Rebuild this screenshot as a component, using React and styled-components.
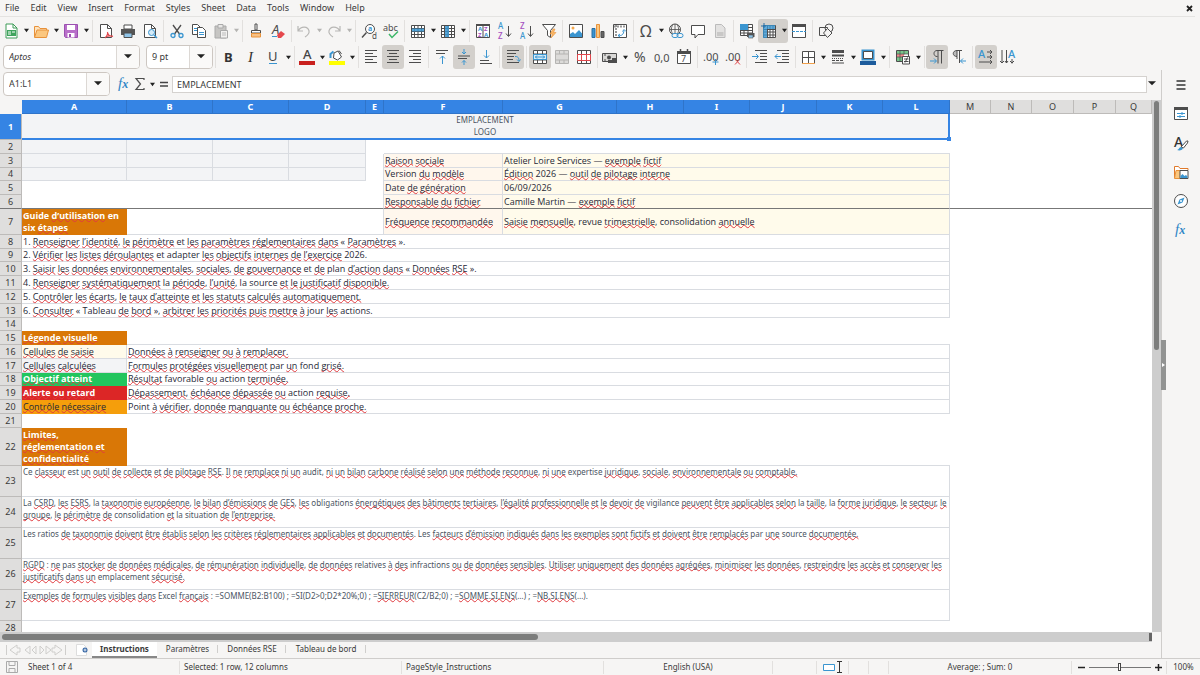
import React from 'react';
import styled, { createGlobalStyle, css } from 'styled-components';

const BLUE = '#3584e4';
const DARK = '#4d4d4d';
const ICON_BLUE = '#3a95d0';

/* ---------- icons ---------- */

const line = { fill: 'none', stroke: DARK, strokeWidth: 1 };
const blue = { fill: 'none', stroke: ICON_BLUE, strokeWidth: 1 };

const T = ({ x, y, s = 10, c = DARK, w, i, children }) => (
  <text x={x} y={y} fontSize={s} fill={c} fontWeight={w} fontStyle={i ? 'italic' : undefined} fontFamily="Noto Sans, sans-serif">
    {children}
  </text>
);

const icons = {
  new: (
    <>
      <path d="M3 1h7l4 4v10H3z" fill="#fff" stroke="#3f9c58" />
      <path d="M10 1v4h4" fill="none" stroke="#3f9c58" />
      <path d="M4 7h9v6H4z" fill="#3fa45d" />
      <path d="M5 9h3M5 11h3M9 9h3" stroke="#fff" />
    </>
  ),
  open: (
    <>
      <path d="M1.500 14V3.500h4l1.500 2h6.500V7" fill="#fde3bf" stroke="#e8923a" />
      <path d="M1.500 14.500 4 7h11.500l-2 7.500z" fill="#fbc77f" stroke="#e8923a" />
    </>
  ),
  save: (
    <>
      <path d="M1.500 1.500h13v13h-12l-1-1z" fill="#b86fc9" stroke="#9b4fb0" />
      <path d="M4 2h8v5H4z" fill="#fff" />
      <path d="M4.500 10h7v4.500h-7z" fill="#fff" />
      <path d="M6 11h2v3H6z" fill="#9b4fb0" />
    </>
  ),
  pdf: (
    <>
      <path d="M2.500 1.500h7l4 4v9h-11z" fill="#fff" stroke={DARK} />
      <path d="M9.500 1.500v4h4" {...line} />
      <path d="M7 15c2-2 3-4 2.500-6M9.500 10c1 3 3 3.500 5.500 3M7 14.500c2-1.500 5-2 8-1" fill="none" stroke="#e0474c" strokeWidth="1.200" />
    </>
  ),
  print: (
    <>
      <path d="M4 2h8v4H4z" fill="#fff" stroke={DARK} />
      <path d="M1 6h14v6H1z" fill="#555" />
      <path d="M4 10h8v4.500H4z" fill="#8fc3e6" stroke={DARK} />
    </>
  ),
  preview: (
    <>
      <path d="M2.500 1.500h7l4 4v9h-11z" fill="#fff" stroke={DARK} />
      <path d="M9.500 1.500v4h4" {...line} />
      <circle cx="9.500" cy="9.500" r="3" fill="#d5ebf8" stroke={ICON_BLUE} />
      <path d="m12 12 3 3" stroke={ICON_BLUE} strokeWidth="1.500" />
    </>
  ),
  cut: (
    <>
      <path d="M4 2l6.500 9M12 2 5.500 11" {...line} strokeWidth="1.300" />
      <circle cx="4" cy="12.500" r="2" {...blue} strokeWidth="1.300" />
      <circle cx="12" cy="12.500" r="2" {...blue} strokeWidth="1.300" />
    </>
  ),
  copy: (
    <>
      <path d="M1.500 1.500h5l3 3v7h-8z" fill="#fff" stroke={DARK} />
      <path d="M6.500 4.500h5l3 3v7h-8z" fill="#fff" stroke={DARK} />
      <path d="M3 5.500h3M3 7.500h3M8 9.500h5M8 11.500h5" stroke={ICON_BLUE} />
    </>
  ),
  paste: (
    <>
      <path d="M2 3h11v12H2z" fill="#c6c5c3" stroke="#aaa" />
      <path d="M5 1.500h5V5H5z" fill="#e8e7e6" stroke="#aaa" />
      <path d="M7.500 7.500h7v7.500h-7z" fill="#f2f1f0" stroke="#aaa" />
      <path d="M9 10h4M9 12h4" stroke="#bbb" />
    </>
  ),
  brush: (
    <>
      <path d="M7 1h2v6H7z" fill="#fff" stroke={DARK} />
      <path d="M3.500 7.500h9V10h-9z" fill="#fff" stroke={DARK} />
      <path d="M3.500 10.500h9V14h-9z" fill="#f9c184" stroke="#e8923a" />
    </>
  ),
  clear: (
    <>
      <T x={2} y={11} s={13} i>A</T>
      <path d="m7 12 4-4 4 3-4 4H8z" fill="#e5484d" />
      <path d="M2 13.500h5" stroke={ICON_BLUE} />
    </>
  ),
  undo: <path d="M2 3v5h5M2.500 7.500C5 3 12 3 13 8c.500 2-1 4-4 6" fill="none" stroke="#b8b7b5" strokeWidth="1.200" />,
  redo: <path d="M14 3v5H9M13.500 7.500C11 3 4 3 3 8c-.500 2 1 4 4 6" fill="none" stroke="#b8b7b5" strokeWidth="1.200" />,
  find: (
    <>
      <circle cx="9" cy="6" r="4.500" fill="#fff" stroke={DARK} />
      <path d="m5.500 9.500-4.500 5" stroke={DARK} strokeWidth="1.400" />
      <T x={7} y={8} s={7} c={ICON_BLUE} w={700}>a</T>
      <T x={11} y={16} s={8}>d</T>
    </>
  ),
  spell: (
    <>
      <T x={0} y={8} s={9}>abc</T>
      <path d="m6 11 3 3.500 6-6" fill="none" stroke="#3eb86a" strokeWidth="1.500" />
    </>
  ),
  rows: (
    <>
      <path d="M1.500 2.500h13v12h-13zM1.500 5.500h13M1.500 8.500h13M1.500 11.500h13M4.500 2.500v12M8 2.500v12M11.500 2.500v12" {...line} fill="#fff" />
      <path d="M2 5.500h12v3H2z" fill={ICON_BLUE} opacity=".85" />
    </>
  ),
  cols: (
    <>
      <path d="M1.500 2.500h13v12h-13zM1.500 5.500h13M1.500 8.500h13M1.500 11.500h13M4.500 2.500v12M8 2.500v12M11.500 2.500v12" {...line} fill="#fff" />
      <path d="M5 3h4v11H5z" fill={ICON_BLUE} opacity=".85" />
    </>
  ),
  sort: (
    <>
      <path d="M1.500 1.500h13v13h-13zM8 1.500v13" fill="#fff" stroke={DARK} />
      <path d="M1 1h14v2H1z" fill={DARK} />
      <T x={3} y={8} s={6} c={ICON_BLUE} w={700}>A</T>
      <T x={3} y={14} s={6} c="#a44fc0" w={700}>Z</T>
      <T x={9} y={8} s={6} c="#a44fc0" w={700}>Z</T>
      <T x={9} y={14} s={6} c={ICON_BLUE} w={700}>A</T>
    </>
  ),
  asc: (
    <>
      <T x={1} y={6} s={8} c={ICON_BLUE} w={500}>A</T>
      <T x={1} y={16} s={8} c="#a44fc0" w={500}>Z</T>
      <path d="M11.500 3v10M9 10.500l2.500 3 2.500-3" {...line} />
    </>
  ),
  desc: (
    <>
      <T x={1} y={6} s={8} c="#a44fc0" w={500}>Z</T>
      <T x={1} y={16} s={8} c={ICON_BLUE} w={500}>A</T>
      <path d="M11.500 3v10M9 10.500l2.500 3 2.500-3" {...line} />
    </>
  ),
  filter: (
    <>
      <path d="M1.500 1.500h13l-5 6v7l-3-2v-5z" fill="#fff" stroke={DARK} />
      <path d="m12 6-3 5h2.500L10 15l5-5.500h-2.500L14 6z" fill="#fbb968" stroke="#e8923a" strokeWidth=".6" />
    </>
  ),
  image: (
    <>
      <path d="M1.500 1.500h13v13h-13z" fill="#fff" stroke={DARK} />
      <circle cx="5" cy="5" r="1.500" fill="#f5a94e" />
      <path d="m2 14v-3l3-2 2 2 4-4 3 3.500V14z" fill={ICON_BLUE} />
    </>
  ),
  chart: (
    <>
      <path d="M2 5.500h3v9H2z" fill={ICON_BLUE} stroke="#2a6ea3" />
      <path d="M6.500 1.500h3v13h-3z" fill="#fbc77f" stroke="#e8923a" />
      <path d="M11 8.500h3v6h-3z" fill="#666" stroke={DARK} />
    </>
  ),
  pivot: (
    <>
      <path d="M1.500 1.500h13v13h-13z" fill="#fff" stroke={DARK} />
      <path d="M2 3.500h12M4 2v12" stroke="#999" strokeWidth="2" strokeDasharray="2 1" />
      <path d="M6 12.500c4 .500 5.500-1 6-5M10.500 8.500l1.500-2 2 2M8 11l-2 1.500L8 14" {...blue} />
    </>
  ),
  omega: <T x={2} y={14} s={16}>Ω</T>,
  link: (
    <>
      <circle cx="7" cy="6.500" r="5.500" {...line} />
      <path d="M1.500 6.500h11M7 1v11M4.500 2c-1.500 3-1.500 6 0 9M9.500 2c1.500 3 1.500 6 0 9" {...line} strokeWidth=".8" />
      <rect x="4" y="10.500" width="6" height="4" rx="2" fill="#f6f5f4" stroke={ICON_BLUE} />
      <rect x="9" y="10.500" width="6" height="4" rx="2" {...blue} />
    </>
  ),
  comment: <path d="M1.500 2.500h13v9H8l-3 3.500v-3.500H1.500z" fill="#fff" stroke={DARK} />,
  header: (
    <>
      <path d="M3.500 1.500h6l3.500 3.500v9.500H3.500z" fill="#e3e2e1" stroke="#bbb" />
      <path d="M5 9h6.500v4H5z" fill="#c9c8c7" />
    </>
  ),
  area: (
    <>
      <path d="M1.500 1.500h12v11h-12zM1.500 4.500h12M1.500 7.500h12M1.500 10h12M5 1.500v11M9 1.500v11" fill="#fff" stroke={DARK} />
      <path d="M1 1h8v6H1z" fill={ICON_BLUE} />
      <path d="M8 10h7.500v4H8z" fill="#555" />
      <path d="M9.500 12h4.500v3H9.500z" fill="#8fc3e6" stroke={DARK} strokeWidth=".6" />
    </>
  ),
  freeze: (
    <>
      <path d="M2.500 2.500h12v12h-12zM2.500 6.500h12M2.500 9h12M2.500 12h12M6.500 2.500v12M9 2.500v12M12 2.500v12" fill="#fff" stroke={DARK} />
      <path d="M2 2h12v4H6v9H2z" fill={ICON_BLUE} opacity=".8" />
      <path d="M0 3h5M3 0v5" stroke="#2a6ea3" />
    </>
  ),
  split: (
    <>
      <path d="M1.500 2v12.500h13V2" fill="#fff" stroke={DARK} />
      <path d="M1 1h14v3H1z" fill={DARK} />
      <path d="M1 8.500h14" stroke={ICON_BLUE} strokeDasharray="3 1" />
    </>
  ),
  shapes: (
    <>
      <path d="M1.500 4.500h8v8h-8z" {...line} />
      <circle cx="11" cy="5" r="4" {...line} />
      <path d="m9.500 5.500 4.500 4.500-4.500 4.500L5.500 10z" fill="#f6f5f4" stroke={DARK} />
    </>
  ),
  bold: <T x={3} y={13} s={13} c="#333" w={700}>B</T>,
  italic: (
    <text x="5" y="13" fontSize="15" fontStyle="italic" fill="#333" fontFamily="Liberation Serif, serif">I</text>
  ),
  underline: (
    <>
      <T x={3} y={12} s={13} c="#444">U</T>
      <path d="M4 14.500h8" stroke={ICON_BLUE} />
    </>
  ),
  fontcolor: (
    <>
      <T x={4} y={10} s={13} c="#444" w={500}>A</T>
      <path d="M0 12h16v4H0z" fill="#c9211e" />
    </>
  ),
  fill: (
    <>
      <path d="m5 4 4-2 3.500 6-4 3-4-2z" fill="#fff" stroke={DARK} />
      <path d="M1.500 9V5l3-2.500" fill="none" stroke={ICON_BLUE} strokeWidth="2" />
      <path d="M10 1.500 12.500 5" {...line} />
      <path d="M0 12h16v4H0z" fill="#ff0" />
    </>
  ),
  left: <path d="M2 1.500h12M2 4.500h8M2 7.500h12M2 10.500h8M2 13.500h12" {...line} />,
  center: <path d="M2 1.500h12M4 4.500h8M2 7.500h12M4 10.500h8M2 13.500h12" {...line} />,
  right: <path d="M2 1.500h12M6 4.500h8M2 7.500h12M6 10.500h8M2 13.500h12" {...line} />,
  top: (
    <>
      <path d="M2 1.500h12M2 4.500h9" {...line} />
      <path d="M8.500 15V7M6 9.500 8.500 7 11 9.500" {...blue} />
    </>
  ),
  middle: (
    <>
      <path d="M2 7h12M2 9.500h9" {...line} />
      <path d="M8 0v5M6 3l2 2 2-2M8 16v-4.500M6 13.500l2-2 2 2" {...blue} />
    </>
  ),
  bottom: (
    <>
      <path d="M2 11.500h9M2 14.500h12" {...line} />
      <path d="M8.500 1v8M6 6.500 8.500 9 11 6.500" {...blue} />
    </>
  ),
  wrap: (
    <>
      <path d="M2 1.500h12M2 4.500h9M2 7.500h7M2 10.500h6M2 13.500h12" {...line} />
      <path d="M10 7.500c3 0 4 1 4 4.500M12 10.500l2 2 1.500-2" {...blue} />
    </>
  ),
  merge: (
    <>
      <path d="M1.500 1.500h13v13h-13zM1.500 5h13M1.500 11h13M5.500 1.500V5M10.500 1.500V5M5.500 11v3.500M10.500 11v3.500" fill="#fff" stroke={DARK} />
      <path d="M1.500 5.500h13v5h-13z" fill="#d5ebf8" stroke={ICON_BLUE} />
      <path d="M3 8h10M5 6.500 3.500 8 5 9.500M11 6.500 12.500 8 11 9.500" {...blue} />
    </>
  ),
  mergeoff: <path d="M1.500 1.500h13v13h-13zM1.500 5h13M1.500 11h13M5.500 1.500V5M10 1.500V5M5.500 11v3.500M10 11v3.500" fill="#dcdbd9" stroke="#b5b4b2" />,
  unmerge: (
    <>
      <path d="M1.500 1.500h13v13h-13zM5.500 1.500v13M10.500 1.500v13" fill="#fff" stroke={DARK} />
      <path d="M1.500 5.500h13v6h-13zM5.500 5.500v6M10.500 5.500v6" fill="#fff" stroke="#e0474c" />
    </>
  ),
  currency: (
    <>
      <path d="M.500 4.500h14v8H.500z" fill="#d9d8d6" stroke={DARK} />
      <circle cx="7" cy="8.500" r="2" fill={DARK} />
      <path d="M10 9h5v5h-5zM6 11h4v3H6z" fill={DARK} />
      <path d="M2 6h2M2 11h2" {...line} />
    </>
  ),
  percent: <T x={2} y={13} s={14}>%</T>,
  number: <T x={0} y={13} s={11}>0,0</T>,
  date: (
    <>
      <path d="M1.500 3h13v11.500h-13z" fill="#fff" stroke={DARK} />
      <path d="M1 2h14v3H1z" fill={DARK} />
      <path d="M4.500 0v3M11.500 0v3" stroke={DARK} strokeWidth="1.500" />
      <T x={5} y={13} s={9}>7</T>
    </>
  ),
  adddec: (
    <>
      <T x={0} y={12} s={11}>.00</T>
      <path d="M12.500 10v6M9.500 13h6" {...blue} />
    </>
  ),
  deldec: (
    <>
      <T x={0} y={12} s={11}>.00</T>
      <path d="m10 10 5 5.500M15 10l-5 5.500" fill="none" stroke="#e0474c" />
    </>
  ),
  indent: (
    <>
      <path d="M3 1.500h12M8 4.500h7M8 7.500h7M8 10.500h7M3 13.500h12" {...line} />
      <path d="M0 7.500h6M4 5l2.500 2.500L4 10" {...blue} />
    </>
  ),
  outdent: (
    <>
      <path d="M3 1.500h12M8 4.500h7M8 7.500h7M8 10.500h7M3 13.500h12" {...line} />
      <path d="M1 7.500h6M3.500 5 1 7.500 3.500 10" {...blue} />
    </>
  ),
  borders: (
    <>
      <path d="M2.500 14V2.500h12V14M8.500 2.500v12M2.500 8.500h12" fill="#fff" stroke={DARK} />
      <path d="M2 14.500h13" stroke="#f0a04b" />
    </>
  ),
  style: (
    <>
      <path d="M2 2.500h12" stroke={DARK} strokeWidth="3" />
      <path d="M2 6.500h12" stroke={DARK} strokeWidth="2" />
      <path d="M2 9.500h12" stroke={DARK} strokeDasharray="1 1" />
      <path d="M2 11.500h12" stroke={DARK} strokeDasharray="3 1" />
      <path d="M2 14h12" {...line} />
    </>
  ),
  bordercolor: (
    <>
      <path d="M2.500 1.500h11v9h-11z" fill="#fff" stroke={ICON_BLUE} strokeWidth="2" />
      <path d="M3.500 2.500h9v7h-9z" {...line} />
      <path d="M0 12h16v4H0z" fill="#1d5c9c" />
    </>
  ),
  cond: (
    <>
      <path d="M1.500 1.500h12v11h-12z" fill="#fff" stroke={DARK} />
      <path d="M2 2h11v3H2z" fill="#79c68c" />
      <path d="M2 5h7v3H2z" fill="#f08b8e" />
      <path d="M2 8h5v4H2z" fill="#79c68c" />
      <path d="M1.500 5h12M1.500 8h12M5 1.500v11M9 1.500v4" {...line} strokeWidth=".7" />
      <path d="M7.500 7.500h7v7.500h-7z" fill="#fff" stroke={DARK} />
      <path d="M9 10h4.500M9 12.500h4.500M12.500 8.500l-2.500 5" {...line} />
    </>
  ),
  ltr: (
    <>
      <path d="M14.500 1.500H8c-4 0-4 6 0 6h.500M9 1.500v13M12.500 1.500v13" {...line} />
      <path d="M1 12h6M5 9.500 7.500 12 5 14.500" {...blue} />
    </>
  ),
  rtl: (
    <>
      <path d="M11 1.500H6c-5 0-5 6 0 6v-6M6 7.500V10M8.500 1.500V14" fill="#bbb" stroke={DARK} />
      <path d="M15 12H9.500M12 9.500 9.500 12l2.500 2.500" {...blue} />
    </>
  ),
  horiz: (
    <>
      <T x={0} y={9} s={11} c={ICON_BLUE} w={500}>A</T>
      <path d="M9 3h5M12 1l2 2-2 2M9 8h5M12 6l2 2-2 2M1 13h13M12 11l2 2-2 2" {...line} />
    </>
  ),
  vert: (
    <>
      <T x={8} y={9} s={11} c={ICON_BLUE} w={500}>A</T>
      <path d="M2 1v13M0 12l2 2 2-2M6.500 1v13M5 12l1.500 2L8 12M12 10v4.500M10 12l2 2 2-2" {...line} />
    </>
  ),
  fx: (
    <text x="2" y="12" fontSize="15" fontStyle="italic" fill="#2f86c6" fontFamily="Liberation Serif, serif">
      f<tspan fontSize="12" fontWeight="700">x</tspan>
    </text>
  ),
  sum: <path d="M12 4V2.500H4L8.500 8 4 13.500h8V12" {...line} strokeWidth="1.200" />,
  equals: <path d="M4 6.500h8M4 10h8" stroke="#444" strokeWidth="1.500" />,
  menu: <path d="M3.500 4h9M3.500 8h9M3.500 12h9" stroke="#333" strokeWidth="1.500" />,
  props: (
    <>
      <path d="M1.500 1.500h13v12h-13z" fill="#fff" stroke={DARK} />
      <path d="M1 1h14v3H1z" fill={DARK} />
      <path d="M4 7.500h8M4 10.500h8M9 6v3M7 9v3" {...blue} />
    </>
  ),
  styles: (
    <>
      <T x={1} y={12} s={14} c="#333" w={500}>A</T>
      <path d="m8 12 5.500-6h1.500l-.500 2-4 5z" fill="#fff" stroke={DARK} />
      <path d="M4 15c2 0 2-3 4-3l2 1.500c-1 2-4 2.500-6 1.500z" fill={ICON_BLUE} />
    </>
  ),
  gallery: (
    <>
      <path d="M1.500 14V2.500h4l1.500 2h8V6" fill="#fff" stroke="#e07a2b" />
      <path d="M1.500 14.500 3 6.500h11v8z" fill="#fbc77f" stroke="#e8923a" />
      <path d="M7 6.500h8v8H7z" fill="#fff" stroke={DARK} />
      <path d="m7.500 14v-2l2-2 2 2 1.500-1 1.500 1.500V14z" fill={ICON_BLUE} />
    </>
  ),
  navigator: (
    <>
      <circle cx="8" cy="8" r="6.500" fill="#fff" stroke={DARK} />
      <path d="M11.500 4.500 9.500 9.500 4.500 11.500 6.500 6.500z" fill={ICON_BLUE} />
      <circle cx="8" cy="8" r="1" fill="#fff" />
    </>
  ),
};

const Svg = styled.svg`
  display: block;
  flex: none;
  overflow: visible;
`;

const Icon = ({ name, size = 16 }) => (
  <Svg width={size} height={size} viewBox="0 0 16 16" aria-hidden="true">
    {icons[name]}
  </Svg>
);

const Caret = ({ size = 5, muted }) => (
  <Svg width={size} height={size} viewBox="0 0 6 6" aria-hidden="true">
    <path d={size > 5 ? 'M0 1h6L3 4z' : 'M0 1h6L3 5z'} fill={muted ? '#b5b4b2' : '#222'} />
  </Svg>
);

/* ---------- data ---------- */

const menus = ['File', 'Edit', 'View', 'Insert', 'Format', 'Styles', 'Sheet', 'Data', 'Tools', 'Window', 'Help'];

// "+" adds a drop-down arrow, "*" is switched on, "!" is disabled, "|" and ";" are separators
const standardBar =
  'new+ open+ save+ | pdf print preview | cut copy paste+! | brush clear ; undo+! redo+! | find spell | rows+ cols+ | sort asc desc filter | image chart pivot ; omega+ link comment header | area freeze+* split | shapes';
const formatBar =
  '| bold italic underline+ ; fontcolor+ fill+ ; left center* right | top middle* bottom | wrap* | merge* mergeoff unmerge ; currency+ percent number date | adddec deldec | indent outdent ; borders+ style+ bordercolor+ | cond+ ; ltr* rtl | horiz* vert';

const columns = [
  ['A', 105], ['B', 86], ['C', 76], ['D', 77], ['E', 18], ['F', 119], ['G', 114], ['H', 67], ['I', 66],
  ['J', 67], ['K', 66], ['L', 67], ['M', 41], ['N', 41], ['O', 42], ['P', 42], ['Q', undefined],
];

// words between brackets carry the spell checker's underline
const rows = [
  { h: 26, cells: [{ span: 12, kind: 'selected', text: 'EMPLACEMENT\nLOGO' }] },
  { h: 14, cells: [{ kind: 'grey' }, { kind: 'grey' }, { kind: 'grey' }, { kind: 'grey' }, {}, { span: 7, kind: 'under' }] },
  { h: 14, cells: [{ kind: 'grey' }, { kind: 'grey' }, { kind: 'grey' }, { kind: 'grey' }, { kind: 'side' }, { kind: 'peach', text: '[Raison] [sociale]' }, { span: 6, kind: 'cream', text: 'Atelier Loire Services — [exemple] [fictif]' }] },
  { h: 13, cells: [{ kind: 'grey' }, { kind: 'grey' }, { kind: 'grey' }, { kind: 'grey' }, { kind: 'side' }, { kind: 'peach', text: 'Version [du] [modèle]' }, { span: 6, kind: 'cream', text: '[Édition] 2026 — [outil] [de] [pilotage] [interne]' }] },
  { h: 14, cells: [{ span: 5, kind: 'side' }, { kind: 'peach', text: 'Date [de] [génération]' }, { span: 6, kind: 'cream', text: '06/09/2026' }] },
  { h: 14, frozen: true, cells: [{ span: 5, kind: 'side' }, { kind: 'peach', text: '[Responsable] [du] [fichier]' }, { span: 6, kind: 'cream', text: 'Camille Martin — [exemple] [fictif]' }] },
  { h: 26, cells: [{ kind: 'title', text: 'Guide [d’utilisation] en\nsix [étapes]' }, { span: 4, kind: 'corner' }, { kind: 'peach', text: '[Fréquence] [recommandée]' }, { span: 6, kind: 'cream', text: '[Saisie] [mensuelle], revue [trimestrielle], consolidation [annuelle]' }] },
  { h: 14, cells: [{ span: 12, kind: 'plain', text: '1. [Renseigner] [l’identité], [le] [périmètre] et [les] [paramètres] [réglementaires] [dans] « [Paramètres] ».' }] },
  { h: 13, cells: [{ span: 12, kind: 'plain', text: '2. [Vérifier] [les] [listes] [déroulantes] et adapter [les] [objectifs] [internes] [de] [l’exercice] 2026.' }] },
  { h: 14, cells: [{ span: 12, kind: 'plain', text: '3. [Saisir] [les] [données] [environnementales], [sociales], [de] [gouvernance] et [de] plan [d’action] [dans] « [Données] [RSE] ».' }] },
  { h: 14, cells: [{ span: 12, kind: 'plain', text: '4. [Renseigner] [systématiquement] la [période], [l’unité], la source [et] [le] [justificatif] [disponible.]' }] },
  { h: 14, cells: [{ span: 12, kind: 'plain', text: '5. [Contrôler] [les] [écarts], [le] [taux] [d’atteinte] [et] [les] [statuts] [calculés] [automatiquement.]' }] },
  { h: 14, cells: [{ span: 12, kind: 'plain', text: '6. [Consulter] « Tableau [de] [bord] », [arbitrer] [les] [priorités] [puis] [mettre] [à] jour [les] actions.' }] },
  { h: 13, cells: [] },
  { h: 14, cells: [{ kind: 'title', text: '[Légende] [visuelle]' }, { span: 11, kind: 'under' }] },
  { h: 14, cells: [{ kind: 'cream', text: '[Cellules] [de] [saisie]' }, { span: 11, kind: 'plain', text: '[Données] [à] [renseigner] [ou] [à] [remplacer.]' }] },
  { h: 14, cells: [{ kind: 'grey', text: '[Cellules] [calculées]' }, { span: 11, kind: 'plain', text: '[Formules] [protégées] [visuellement] par [un] fond [grisé.]' }] },
  { h: 13, cells: [{ kind: 'green', text: '[Objectif] [atteint]' }, { span: 11, kind: 'plain', text: '[Résultat] favorable [ou] action [terminée.]' }] },
  { h: 14, cells: [{ kind: 'red', text: '[Alerte] [ou] [retard]' }, { span: 11, kind: 'plain', text: '[Dépassement], [échéance] [dépassée] [ou] action [requise.]' }] },
  { h: 14, cells: [{ kind: 'amber', text: '[Contrôle] [nécessaire]' }, { span: 11, kind: 'plain', text: 'Point [à] [vérifier], [donnée] [manquante] [ou] [échéance] [proche.]' }] },
  { h: 14, cells: [] },
  { h: 38, cells: [{ kind: 'title', text: '[Limites],\n[réglementation] [et]\n[confidentialité]' }, { span: 11, kind: 'under' }] },
  { h: 31, cells: [{ span: 12, kind: 'note', text: 'Ce [classeur] est [un] [outil] [de] [collecte] [et] [de] [pilotage] [RSE]. [Il] [ne] [remplace] [ni] [un] audit, [ni] [un] [bilan] [carbone] [réalisé] [selon] [une] [méthode] [reconnue], [ni] [une] expertise [juridique], [sociale], [environnementale] [ou] [comptable.]' }] },
  { h: 31, cells: [{ span: 12, kind: 'note', text: 'La [CSRD], [les] [ESRS], la [taxonomie] [européenne], [le] [bilan] [d’émissions] [de] [GES], [les] obligations [énergétiques] [des] [bâtiments] [tertiaires], [l’égalité] [professionnelle] [et] [le] [devoir] [de] vigilance [peuvent] [être] [applicables] [selon] la [taille], la [forme] [juridique], [le] [secteur], [le]\n[groupe], [le] [périmètre] [de] consolidation [et] la situation [de] [l’entreprise.]' }] },
  { h: 31, cells: [{ span: 12, kind: 'note', text: 'Les ratios [de] [taxonomie] [doivent] [être] [établis] [selon] [les] [critères] [réglementaires] [applicables] [et] [documentés]. Les [facteurs] [d’émission] [indiqués] [dans] [les] [exemples] [sont] [fictifs] [et] [doivent] [être] [remplacés] par [une] source [documentée.]' }] },
  { h: 31, cells: [{ span: 12, kind: 'note', text: '[RGPD] : [ne] pas [stocker] [de] [données] [médicales], [de] [rémunération] [individuelle], [de] [données] relatives [à] [des] infractions [ou] [de] [données] [sensibles]. [Utiliser] [uniquement] [des] [données] [agrégées], [minimiser] [les] [données], [restreindre] [les] [accès] [et] [conserver] [les]\n[justificatifs] [dans] [un] emplacement [sécurisé.]' }] },
  { h: 31, cells: [{ span: 12, kind: 'note', text: '[Exemples] [de] [formules] [visibles] [dans] Excel [français] : =SOMME(B2:B100) ; =SI(D2>0;D2*20%;0) ; =[SIERREUR](C2/B2;0) ; =[SOMME.SI.ENS](…) ; =[NB.SI.ENS](…).' }] },
  { h: 14, cells: [] },
];

/* ---------- parts ---------- */

const Toolbar = ({ items }) =>
  items.split(' ').map((item, i) => {
    if (item === '|' || item === ';') return <Separator key={i} $tight={item === ';'} />;
    const name = item.replace(/[+*!]/g, '');
    const disabled = item.includes('!');
    return (
      <ToolGroup key={i} $on={item.includes('*')}>
        <ToolButton aria-label={name} disabled={disabled}>
          <Icon name={name} />
        </ToolButton>
        {item.includes('+') && (
          <ArrowButton aria-label={`${name} options`} disabled={disabled}>
            <Caret muted={disabled} />
          </ArrowButton>
        )}
      </ToolGroup>
    );
  });

const Combo = ({ label, value, width, italic }) => (
  <ComboBox $width={width}>
    <ComboInput aria-label={label} defaultValue={value} $italic={italic} />
    <ComboArrow aria-label={`${label} list`}>
      <Caret size={8} />
    </ComboArrow>
  </ComboBox>
);

const CellText = ({ text }) =>
  text.split(/(\[[^\]]+\]|\n)/).map((part, i) => {
    if (part === '\n') return <br key={i} />;
    if (part[0] === '[') return <Misspelt key={i}>{part.slice(1, -1)}</Misspelt>;
    return part;
  });

const Sheet = () => (
  <Table>
    <colgroup>
      <Col $w={22} />
      {columns.map(([name, w]) => (
        <Col key={name} $w={w} />
      ))}
    </colgroup>
    <thead>
      <tr>
        <Corner />
        {columns.map(([name], i) => (
          <ColumnHead key={name} scope="col" $on={i < 12}>{name}</ColumnHead>
        ))}
      </tr>
    </thead>
    <tbody>
      {rows.map((row, r) => {
        const used = row.cells.reduce((n, c) => n + (c.span || 1), 0);
        return (
          <Row key={r} $h={row.h} $frozen={row.frozen}>
            <RowHead scope="row" $on={r === 0}>{r + 1}</RowHead>
            {row.cells.map((cell, i) => (
              <Cell key={i} colSpan={cell.span} $kind={cell.kind}>
                {cell.text && <CellText text={cell.text} />}
                {cell.kind === 'selected' && <Handle />}
              </Cell>
            ))}
            <Cell colSpan={17 - used} />
          </Row>
        );
      })}
    </tbody>
  </Table>
);

const App = () => {
  return (
    <React.Fragment>
      <GlobalStyle />
      <Window>
        <MenuBar>
          {menus.map((m) => (
            <MenuButton key={m}>{m}</MenuButton>
          ))}
          <CloseButton aria-label="Close document">
            <Svg width="7" height="7" viewBox="0 0 7 7">
              <path d="m1 1 5 5M6 1 1 6" stroke="#222" strokeWidth="1.800" />
            </Svg>
          </CloseButton>
        </MenuBar>
        <ToolRow $h={27}>
          <Toolbar items={standardBar} />
        </ToolRow>
        <ToolRow $h={26}>
          <Combos>
            <Combo label="Font name" value="Aptos" width={137} italic />
            <Combo label="Font size" value="9 pt" width={67} />
          </Combos>
          <Toolbar items={formatBar} />
        </ToolRow>
        <Body>
          <Main>
            <FormulaBar>
              <Combo label="Name box" value="A1:L1" width={107} />
              <FormulaTools>
                <SmallButton aria-label="Function wizard"><Icon name="fx" /></SmallButton>
                <SmallButton aria-label="Select function"><Icon name="sum" /></SmallButton>
                <ArrowButton aria-label="Function list"><Caret /></ArrowButton>
                <SmallButton aria-label="Formula"><Icon name="equals" /></SmallButton>
              </FormulaTools>
              <FormulaInput aria-label="Input line" defaultValue="EMPLACEMENT" />
              <ExpandButton aria-label="Expand formula bar"><Caret size={8} /></ExpandButton>
            </FormulaBar>
            <SheetArea>
              <SheetView>
                <Sheet />
              </SheetView>
              <VTrack>
                <VThumb />
              </VTrack>
            </SheetArea>
            <HTrack>
              <HThumb />
              <HGrip />
            </HTrack>
            <Tabs>
              <NavButtons>
                <Svg width="62" height="14" viewBox="0 0 62 14">
                  <path
                    d="M1.500 2v10M12 2 5 7l7 5V9h3V5h-3zM25 3l-5 4 5 4V3M31 3l-4 4 4 4zM35 3l4 4-4 4zM41 3l5 4-5 4zM50 2l7 5-7 5V9h-3V5h3zM60.500 2v10"
                    fill="none"
                    stroke="#cfcecc"
                  />
                </Svg>
              </NavButtons>
              <AddSheet aria-label="Add sheet">
                <Svg width="14" height="14" viewBox="0 0 14 14">
                  <path d="M1.500 1.500h7l3 3v8h-10z" fill="#fff" stroke="#ddd" />
                  <circle cx="10" cy="7" r="2.500" fill="#3465a4" />
                  <path d="M8.500 7h3M10 5.500v3" stroke="#fff" strokeWidth=".8" />
                </Svg>
              </AddSheet>
              <Tab $width={65} $active>Instructions</Tab>
              <Tab $width={61}>Paramètres</Tab>
              <Tab $width={68}>Données RSE</Tab>
              <Tab $width={80}>Tableau de bord</Tab>
            </Tabs>
          </Main>
          <SideBar>
            <SideGrip />
            {['menu', 'props', 'styles', 'gallery', 'navigator', 'fx'].map((name) => (
              <SideButton key={name} aria-label={name}>
                <Icon name={name} />
              </SideButton>
            ))}
          </SideBar>
        </Body>
        <StatusBar>
          <Status $w={24}>
            <Svg width="12" height="12" viewBox="0 0 12 12">
              <path d="M.500.500h11v11H.500zM3 .500v4h6v-4M3 11.500v-4h6v4" fill="none" stroke="#aaa" />
            </Svg>
          </Status>
          <Status $w={155} $left>Sheet 1 of 4</Status>
          <Status $w={222} $left $line>Selected: 1 row, 12 columns</Status>
          <Status $w={202} $left $line>PageStyle_Instructions</Status>
          <Status $w={169} $line>English (USA)</Status>
          <Status $w={44} $line />
          <Status $w={32} $line>
            <Svg width="20" height="12" viewBox="0 0 20 12">
              <path d="M.500 3.500h11v6H.500z" fill="#fff" stroke={ICON_BLUE} />
              <path d="M14 .500h5M14 11.500h5M16.500 1v10" stroke="#333" />
            </Svg>
          </Status>
          <Status $w={20} $line />
          <Status $w={20} $line />
          <Status $grow $line>Average: ; Sum: 0</Status>
          <ZoomControl>
            <ZoomButton aria-label="Zoom out">
              <Svg width="7" height="7" viewBox="0 0 7 7"><path d="M0 3.500h7" stroke="#222" strokeWidth="1.500" /></Svg>
            </ZoomButton>
            <ZoomSlider type="range" aria-label="Zoom" min="0" max="100" defaultValue="49" />
            <ZoomButton aria-label="Zoom in">
              <Svg width="7" height="7" viewBox="0 0 7 7"><path d="M0 3.500h7M3.500 0v7" stroke="#222" strokeWidth="1.500" /></Svg>
            </ZoomButton>
          </ZoomControl>
          <Status $w={34} $line>100%</Status>
        </StatusBar>
      </Window>
    </React.Fragment>
  );
};

const GlobalStyle = createGlobalStyle`
  * {
    box-sizing: border-box;
  }
  body {
    margin: 0;
    background: #f6f5f4;
    color: #3a3a3a;
    font: 9px/12px 'Noto Sans', sans-serif;
  }
  button, input {
    margin: 0;
    padding: 0;
    border: 0;
    background: none;
    color: inherit;
    font: inherit;
  }
`;

const Window = styled.div`
  display: flex;
  flex-direction: column;
  height: 100vh;
  overflow: hidden;
`;

const MenuBar = styled.nav`
  display: flex;
  align-items: center;
  gap: 1px;
  flex: none;
  height: 17px;
  margin-right: 5px;
  border-bottom: 1px solid #e4e3e1;
`;

const MenuButton = styled.button`
  padding: 0 5px;
`;

const CloseButton = styled.button`
  margin-left: auto;
  padding: 0 2px;
`;

const ToolRow = styled.div`
  display: flex;
  align-items: center;
  flex: none;
  height: ${(props) => props.$h}px;
`;

const ToolGroup = styled.div`
  display: flex;
  height: 24px;
  border-radius: 3px;
  background: ${(props) => (props.$on ? '#d3d0cc' : 'none')};
`;

const ToolButton = styled.button`
  display: flex;
  align-items: center;
  justify-content: center;
  width: 22px;
`;

const ArrowButton = styled.button`
  display: flex;
  align-items: center;
  justify-content: center;
  width: 8px;
`;

const Separator = styled.div`
  width: ${(props) => (props.$tight ? 4 : 5)}px;
  height: 22px;
  background: linear-gradient(#e2e0de, #e2e0de) center / 1px 100% no-repeat;
`;

const Combos = styled.div`
  display: flex;
  gap: 6px;
  padding-left: 3px;
`;

const ComboBox = styled.div`
  display: flex;
  flex: none;
  width: ${(props) => props.$width}px;
  height: 24px;
  border: 1px solid #cdc7c2;
  border-radius: 4px;
  background: #fff;
  overflow: hidden;
`;

const ComboInput = styled.input`
  flex: 1;
  min-width: 0;
  padding-left: 5px;
  font-style: ${(props) => (props.$italic ? 'italic' : 'normal')};
`;

const ComboArrow = styled.button`
  display: flex;
  align-items: center;
  justify-content: center;
  width: 23px;
  border-left: 1px solid #dcd8d4;
  background: #faf9f8;
`;

const Body = styled.div`
  display: flex;
  flex: 1;
  min-height: 0;
`;

const Main = styled.div`
  display: flex;
  flex-direction: column;
  flex: 1;
  min-width: 0;
`;

const FormulaBar = styled.div`
  display: flex;
  align-items: center;
  flex: none;
  height: 30px;
  padding: 0 4px 2px 3px;
`;

const FormulaTools = styled.div`
  display: flex;
  padding-left: 6px;
`;

const SmallButton = styled.button`
  display: flex;
  justify-content: center;
  width: 16px;
`;

const FormulaInput = styled.input`
  flex: 1;
  height: 17px;
  padding-left: 4px;
  border: 1px solid #d5d2cf;
  background: #fff;
`;

const ExpandButton = styled.button`
  padding: 0 1px;
`;

const SheetArea = styled.div`
  display: flex;
  flex: 1;
  min-height: 0;
`;

const SheetView = styled.div`
  flex: 1;
  min-width: 0;
  overflow: hidden;
  background: #fff;
`;

const Table = styled.table`
  width: 100%;
  table-layout: fixed;
  border-spacing: 0;
`;

const Col = styled.col`
  width: ${(props) => (props.$w ? `${props.$w}px` : 'auto')};
`;

const Corner = styled.td`
  padding: 0;
  background: #f6f5f4;
`;

const ColumnHead = styled.th`
  height: 14px;
  padding: 0;
  border-right: 1px solid ${(props) => (props.$on ? '#2f74c9' : '#bdbbb9')};
  border-bottom: 1px solid ${(props) => (props.$on ? '#2f74c9' : '#bdbbb9')};
  background: ${(props) => (props.$on ? BLUE : '#dfdedd')};
  color: ${(props) => (props.$on ? '#fff' : '#3a3a3a')};
  font-weight: ${(props) => (props.$on ? 700 : 400)};
`;

const RowHead = styled.th`
  padding: 0;
  border-right: 1px solid #bdbbb9;
  border-bottom: 1px solid #bdbbb9;
  background: ${(props) => (props.$on ? BLUE : '#dfdedd')};
  color: ${(props) => (props.$on ? '#fff' : '#3a3a3a')};
  font-weight: ${(props) => (props.$on ? 700 : 400)};
`;

const RULE = '1px solid #d9dce1';

const filled = (background, color, weight) => css`
  border-right: 1px solid ${background};
  border-bottom: 1px solid ${background};
  background: ${background};
  color: ${color};
  font-weight: ${weight};
`;

const ruled = (background) => css`
  border-right: ${RULE};
  border-bottom: ${RULE};
  background: ${background};
`;

const kinds = {
  plain: ruled('#fff'),
  grey: ruled('#f3f4f6'),
  cream: ruled('#fffbeb'),
  peach: ruled('#fff7ed'),
  title: filled('#d97706', '#fff', 700),
  green: filled('#22c55e', '#fff', 700),
  red: filled('#dc2626', '#fff', 700),
  amber: filled('#f59e0b', '#1f2937', 400),
  corner: ruled('#fff'),
  under: css`
    border-bottom: ${RULE};
  `,
  side: css`
    border-right: ${RULE};
  `,
  note: css`
    ${ruled('#fff')}
    color: #4b5563;
    font: 8px/12px 'Noto Sans', sans-serif;
    vertical-align: top;
  `,
  selected: css`
    position: relative;
    border: solid ${BLUE};
    border-width: 0 2px 2px 0;
    background: #f3f4f6;
    color: #4b5563;
    font: 8px/12px 'Noto Sans', sans-serif;
    text-align: center;
  `,
};

const Cell = styled.td`
  padding: 0 1px;
  color: #1f2937;
  font-family: 'Open Sans', sans-serif;
  white-space: nowrap;
  ${(props) => kinds[props.$kind]}
`;

const Row = styled.tr`
  height: ${(props) => props.$h}px;
  ${(props) =>
    props.$frozen &&
    css`
      & > td,
      & > th {
        border-bottom: 1px solid #777;
      }
    `}
`;

const Misspelt = styled.span`
  text-decoration: underline wavy #e03a3e 1px;
  text-decoration-skip-ink: none;
  text-underline-offset: -1px;
`;

const Handle = styled.span`
  position: absolute;
  right: -3px;
  bottom: -3px;
  width: 4px;
  height: 4px;
  background: ${BLUE};
`;

const VTrack = styled.div`
  width: 9px;
  padding: 1px 2px;
  background: #cdcdcd;
`;

const VThumb = styled.div`
  height: 47%;
  border-radius: 3px;
  background: #7c7d7c;
`;

const HTrack = styled.div`
  display: flex;
  align-items: center;
  justify-content: space-between;
  flex: none;
  height: 10px;
  margin-right: 9px;
  padding-left: 2px;
  background: #cdcdcd;
`;

const HThumb = styled.div`
  width: 46.600%;
  height: 6px;
  border-radius: 3px;
  background: #7c7d7c;
`;

const HGrip = styled.div`
  width: 3px;
  height: 8px;
  background: #666;
`;

const Tabs = styled.div`
  display: flex;
  flex: none;
  height: 16px;
  font-size: 8px;
`;

const NavButtons = styled.div`
  padding: 1px 0 0 5px;
  width: 75px;
`;

const AddSheet = styled.button`
  width: 17px;
`;

const Tab = styled.button`
  width: ${(props) => props.$width}px;
  border-bottom: 2px solid ${(props) => (props.$active ? '#888' : 'transparent')};
  background: ${(props) =>
    props.$active ? '#fff' : 'linear-gradient(#cfcecc, #cfcecc) right / 1px 8px no-repeat'};
  font-weight: ${(props) => (props.$active ? 700 : 400)};
`;

const SideBar = styled.aside`
  position: relative;
  display: flex;
  flex-direction: column;
  align-items: center;
  width: 39px;
  border-left: 1px solid #cfcdcb;
`;

const SideButton = styled.button`
  display: flex;
  align-items: center;
  justify-content: center;
  width: 24px;
  height: 29px;
`;

const SideGrip = styled.div`
  position: absolute;
  top: 46%;
  left: -1px;
  width: 5px;
  height: 50px;
  background: #929392;

  &::after {
    content: '';
    position: absolute;
    top: 23px;
    left: 1px;
    border: 2px solid transparent;
    border-left: 3px solid #fff;
    border-right: 0;
  }
`;

const StatusBar = styled.footer`
  display: flex;
  align-items: center;
  flex: none;
  height: 17px;
  border-top: 1px solid #cfcdcb;
  font-size: 8px;
`;

const Status = styled.div`
  display: flex;
  align-items: center;
  justify-content: ${(props) => (props.$left ? 'flex-start' : 'center')};
  flex: ${(props) => (props.$grow ? '1' : 'none')};
  width: ${(props) => (props.$w ? `${props.$w}px` : 'auto')};
  height: 13px;
  padding-left: ${(props) => (props.$left ? 4 : 0)}px;
  border-left: ${(props) => (props.$line ? '1px solid #e2e0de' : '0')};
`;

const ZoomControl = styled.div`
  display: flex;
  align-items: center;
  gap: 4px;
  width: 95px;
  height: 13px;
  padding: 0 4px 0 6px;
  border-left: 1px solid #e2e0de;
`;

const ZoomButton = styled.button`
  flex: none;
`;

const ZoomSlider = styled.input`
  flex: 1;
  min-width: 0;
  height: 8px;
  appearance: none;
  background: linear-gradient(#777, #777) center / 100% 1px no-repeat;

  &::-webkit-slider-thumb {
    appearance: none;
    width: 3px;
    height: 8px;
    border: 1px solid #444;
    background: #fff;
  }
`;

export default App;
